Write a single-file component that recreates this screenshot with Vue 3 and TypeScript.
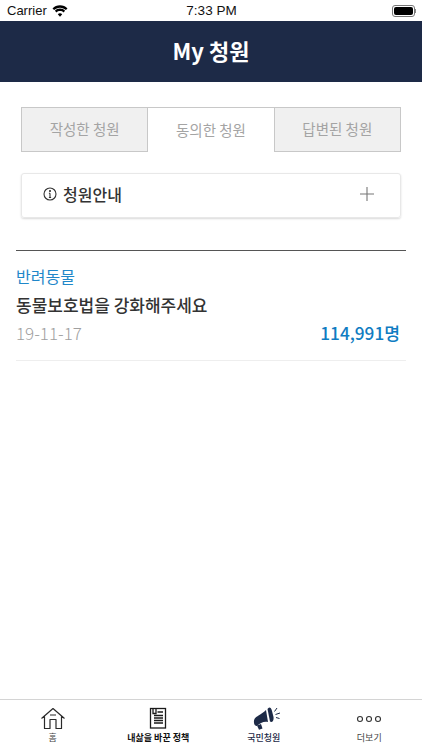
<script setup lang="ts">
const tabs = ['작성한 청원', '동의한 청원', '답변된 청원']
const activeTab = 1
</script>

<template>
  <div class="screen">
    <div class="status">
      <div class="status-left">
        <span>Carrier</span>
        <svg class="wifi" width="16" height="12" viewBox="0 0 16 12">
          <path d="M8 2.700c2.300 0 4.400.9 5.900 2.400l1.600-1.700C13.500 1.400 10.900.2 8 .2S2.500 1.400.5 3.400l1.600 1.700C3.600 3.600 5.700 2.700 8 2.700z" fill="#000"/>
          <path d="M8 6c1.400 0 2.600.5 3.500 1.400l1.600-1.700C11.800 4.400 10 3.600 8 3.600s-3.800.8-5.100 2.100l1.600 1.700C5.400 6.500 6.600 6 8 6z" fill="#000"/>
          <path d="M8 8.300c-.9 0-1.600.3-2.200.9L8 11.700l2.200-2.500c-.6-.6-1.300-.9-2.200-.9z" fill="#000"/>
        </svg>
      </div>
      <span class="time">7:33 PM</span>
      <div class="battery-wrap">
        <div class="battery"><div class="battery-fill"></div></div>
        <div class="battery-nub"></div>
      </div>
    </div>
    <header class="nav">My 청원</header>

    <div class="tabs">
      <div v-for="(t, i) in tabs" :key="t" class="tab" :class="{ active: i === activeTab }">{{ t }}</div>
    </div>

    <div class="notice">
      <div class="notice-left">
        <svg width="14" height="14" viewBox="0 0 14 14" fill="none" stroke="#333" stroke-width="1.100">
          <circle cx="7" cy="7" r="6"/>
          <path d="M7 6.200V10.500M5.900 10.500H8.100M5.900 6.300H7"/>
          <circle cx="7" cy="4" r=".5" fill="#333"/>
        </svg>
        <span>청원안내</span>
      </div>
      <svg width="14" height="14" viewBox="0 0 14 14" stroke="#777" stroke-width="1.100"><path d="M7 0V14M0 7H14"/></svg>
    </div>

    <section class="list">
      <div class="item">
        <div class="cat">반려동물</div>
        <div class="title">동물보호법을 강화해주세요</div>
        <div class="meta">
          <span class="date">19-11-17</span>
          <span class="count">114,991명</span>
        </div>
      </div>
    </section>

    <nav class="tabbar">
      <div class="bar-item">
        <svg width="26" height="24" viewBox="0 0 26 24" fill="none" stroke="#2a2a2a" stroke-width="1.200" stroke-linejoin="round">
          <path d="M1.500 11.500L13 1.500L24.500 11.500M4.500 9.500V21.500H10V12.500H16V21.500H21.500V9.500M10 8H16"/>
        </svg>
        <span>홈</span>
      </div>
      <div class="bar-item strong">
        <svg width="18" height="24" viewBox="0 0 18 24" fill="none" stroke="#1a1a1a" stroke-width="1.300">
          <rect x="1.500" y="1.500" width="15" height="19.500"/>
          <path d="M4 1.500V6.500H7V1.500M8.500 5H14M5 8.500H14M5 11H14M5 13.500H14M5 16H14"/>
        </svg>
        <span>내삶을 바꾼 정책</span>
      </div>
      <div class="bar-item navy">
        <svg width="32" height="24" viewBox="0 0 32 24">
          <path d="M6.500 12C8 9 13 8 18 3L20 15C16 14 12 16 9 19C6.500 19.500 5 15 6.500 12Z" fill="#1d2a47"/>
          <path d="M19.500 2C21 -.5 23 0 24 4L25.500 10C26 14 24 16 22 14.500Z" fill="#1d2a47"/>
          <path d="M9 18.500L13 17L14.500 21.500L11 22.800Z" fill="#1d2a47"/>
          <path d="M26.500 4.500L29 1M27.500 7.500L32 6M28 10.500L31.500 11.500" stroke="#1d2a47" stroke-width="1" fill="none"/>
        </svg>
        <span>국민청원</span>
      </div>
      <div class="bar-item">
        <svg width="26" height="24" viewBox="0 0 26 24" fill="none" stroke="#333" stroke-width="1.100">
          <circle cx="4" cy="12" r="2.500"/><circle cx="13" cy="12" r="2.500"/><circle cx="22" cy="12" r="2.500"/>
        </svg>
        <span>더보기</span>
      </div>
    </nav>
  </div>
</template>

<style>
html, body { margin: 0; background: #fff; }
</style>

<style scoped>
.screen {
  width: 422px;
  height: 750px;
  display: flex;
  flex-direction: column;
  overflow: hidden;
  background: #fff;
  font-family: "Noto Sans CJK KR", "Noto Sans", sans-serif;
  color: #333;
}
.status {
  height: 21px;
  padding: 0 6px 0 7px;
  display: grid;
  grid-template-columns: 1fr auto 1fr;
  align-items: center;
  font-family: "Liberation Sans", sans-serif;
  font-size: 13px;
  color: #111;
}
.status-left { display: flex; align-items: center; gap: 5px; }
.time { font-size: 13.500px; font-weight: 500; }
.battery-wrap { justify-self: end; display: flex; align-items: center; }
.battery {
  width: 19px;
  height: 8px;
  border: 1px solid #777;
  border-radius: 3px;
  padding: 1px;
  box-sizing: content-box;
}
.battery-fill { width: 100%; height: 100%; background: #000; border-radius: 2px; }
.battery-nub { width: 1px; height: 4px; background: #888; }
.nav {
  height: 61px;
  box-sizing: border-box;
  padding-bottom: 3px;
  background: #1d2a47;
  color: #fff;
  font-size: 22px;
  font-weight: 700;
  display: flex;
  align-items: center;
  justify-content: center;
}
.tabs {
  margin: 25px 21px 0;
  display: flex;
  height: 45px;
}
.tab {
  flex: 1;
  box-sizing: border-box;
  padding-bottom: 2px;
  display: flex;
  align-items: center;
  justify-content: center;
  background: #f0f0f0;
  border: 1px solid #c8c8c8;
  color: #a4a4a4;
  font-size: 14.500px;
  font-weight: 400;
}
.tab.active { background: #fff; border-bottom: none; border-left: none; border-right: none; }
.notice {
  margin: 21px 21px 0;
  height: 45px;
  box-sizing: border-box;
  padding: 0 26px 3px 21px;
  display: flex;
  align-items: center;
  justify-content: space-between;
  border: 1px solid #e8e8e8;
  border-radius: 3px;
  box-shadow: 0 1px 2px rgba(0,0,0,.15);
}
.notice-left { display: flex; align-items: center; gap: 6px; font-size: 16px; font-weight: 500; color: #333; }
.list { margin: 32px 16px 0; border-top: 1px solid #555; }
.item { padding: 14px 6px 13px 0; border-bottom: 1px solid #eee; }
.cat { font-size: 16px; line-height: 22px; color: #1f87c9; }
.title { font-size: 17px; line-height: 26px; margin-top: 5px; font-weight: 500; color: #333; }
.meta { display: flex; justify-content: space-between; align-items: center; line-height: 28px; margin-top: 1px; }
.date { font-size: 17px; color: #a0a0a0; font-weight: 300; }
.count { font-size: 17.200px; font-weight: 500; color: #0f7cc2; }
.tabbar {
  margin-top: auto;
  height: 50px;
  border-top: 1px solid #d4d4d4;
  display: grid;
  grid-template-columns: repeat(4, 1fr);
}
.bar-item {
  display: flex;
  flex-direction: column;
  align-items: center;
  padding-top: 7px;
  font-size: 9px;
  color: #444;
}
.bar-item span { line-height: 14px; }
.strong { color: #111; font-weight: 700; }
.navy { color: #1d2a47; font-weight: 500; }
</style>
